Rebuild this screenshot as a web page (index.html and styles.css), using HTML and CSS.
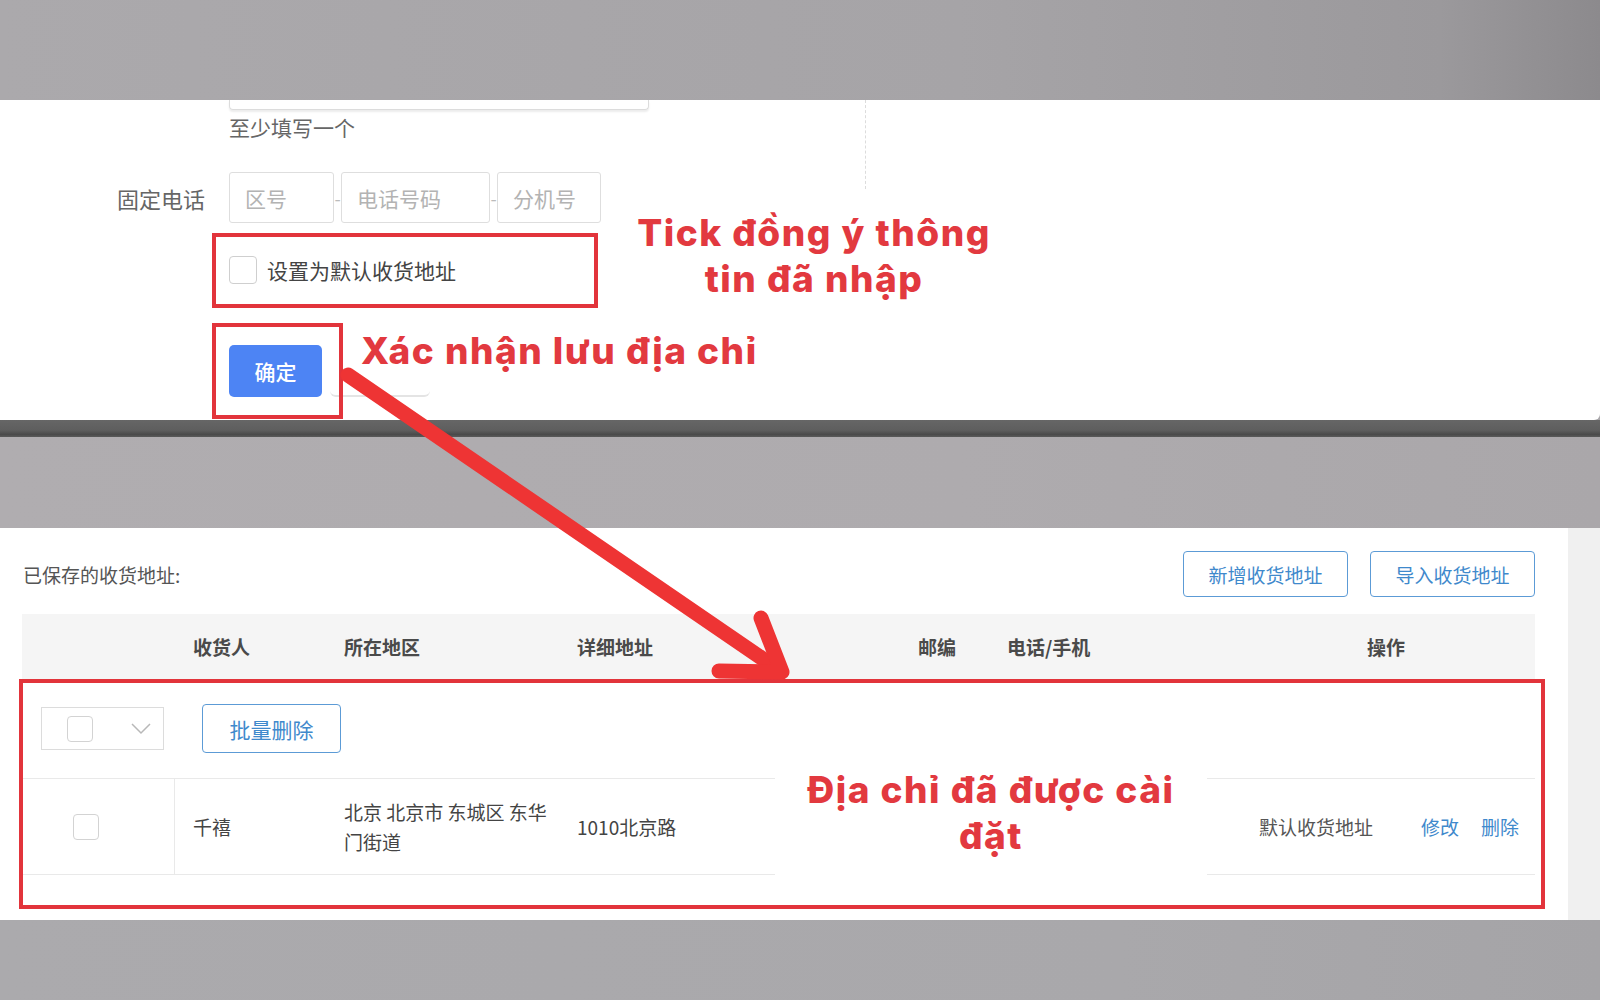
FILE: index.html
```html
<!DOCTYPE html>
<html lang="zh-CN">
<head>
<meta charset="utf-8">
<title>收货地址</title>
<link rel="stylesheet" href="styles.css">
</head>
<body>
<div class="page">
  <div class="band band-top"></div>

  <section class="panel-top">
    <div class="form-col">
      <div class="clipped-input"></div>
      <div class="hint">至少填写一个</div>
      <div class="phone-row">
        <span class="row-label">固定电话</span>
        <div class="inp inp-area">区号</div>
        <span class="dash">-</span>
        <div class="inp inp-num">电话号码</div>
        <span class="dash">-</span>
        <div class="inp inp-ext">分机号</div>
      </div>
      <div class="check-row">
        <span class="cbox"></span>
        <span class="check-text">设置为默认收货地址</span>
      </div>
      <div class="btn-row">
        <button class="btn-primary">确定</button>
        <span class="btn-ghost"></span>
      </div>
    </div>
    <div class="vsep"></div>
  </section>

  <div class="bar"></div>
  <div class="band band-mid"></div>

  <section class="panel-bottom">
    <div class="addr-main">
      <div class="addr-head">
        <span class="addr-title">已保存的收货地址:</span>
        <div class="head-btns">
          <button class="btn-outline">新增收货地址</button>
          <button class="btn-outline">导入收货地址</button>
        </div>
      </div>
      <div class="table">
        <div class="thead">
          <div class="c c-check"></div>
          <div class="c">收货人</div>
          <div class="c">所在地区</div>
          <div class="c">详细地址</div>
          <div class="c">邮编</div>
          <div class="c">电话/手机</div>
          <div class="c c-op-head">操作</div>
        </div>
        <div class="toolbar">
          <div class="select-all">
            <span class="cbox cbox-sm"></span>
            <svg class="chev" width="20" height="12" viewBox="0 0 20 12"><polyline points="1,1 10,10 19,1" fill="none" stroke="#b8b8b8" stroke-width="1.5"/></svg>
          </div>
          <button class="btn-outline btn-batch">批量删除</button>
        </div>
        <div class="trow">
          <div class="c c-check c-check-row"><span class="cbox cbox-sm"></span></div>
          <div class="c">千禧</div>
          <div class="c c-region">北京 北京市 东城区 东华<br>门街道</div>
          <div class="c">1010北京路</div>
          <div class="c"></div>
          <div class="c"></div>
          <div class="c c-op">
            <span class="default-tag">默认收货地址</span>
            <a class="link link-edit">修改</a>
            <a class="link">删除</a>
          </div>
        </div>
      </div>
    </div>
    <div class="addr-strip"></div>
  </section>

  <div class="band band-bottom"></div>

  <!-- annotations -->
  <div class="mark mark-check"></div>
  <div class="mark mark-btn"></div>
  <div class="mark mark-table"></div>
  <div class="note note-tick">Tick đồng ý thông<br>tin đã nhập</div>
  <div class="note note-save">Xác nhận lưu địa chỉ</div>
  <div class="note note-done">Địa chỉ đã được cài<br>đặt</div>
  <svg class="arrow" width="1600" height="1000" viewBox="0 0 1600 1000">
    <g stroke="#ee3434" stroke-width="15" stroke-linecap="round" stroke-linejoin="round" fill="none">
      <path d="M348 375 L779 670"/>
      <path d="M761 618 L782 672 L719 671"/>
    </g>
  </svg>
</div>
</body>
</html>
```

FILE: styles.css
```css
* { box-sizing: border-box; }
html, body { margin: 0; padding: 0; }
body {
  font-family: "Noto Sans CJK SC", "Noto Sans", sans-serif;
  background: #a9a7aa;
}
.page {
  position: relative;
  width: 1600px;
  height: 1000px;
  overflow: hidden;
}
.band-top {
  height: 100px;
  background: linear-gradient(to right, #aba9ac 0%, #a6a4a7 60%, #9b999c 90%, #8c8a8d 100%);
}
.band-mid {
  height: 91px;
  background: linear-gradient(to right, #b0adb0 0%, #aeabae 60%, #aaa7aa 100%);
}
.band-bottom {
  height: 80px;
  background: linear-gradient(to right, #abaaad 0%, #a9a8ab 70%, #a5a4a7 100%);
}
.bar {
  height: 17px;
  background: linear-gradient(#666 0%, #5e5e5e 60%, #4a4a4a 85%, #5a5a5a 100%);
}

/* ---------- top form panel ---------- */
.panel-top {
  height: 320px;
  background: #fff;
  display: flex;
  align-items: flex-start;
  border-radius: 0 0 6px 0;
}
.form-col { width: 865px; }
.clipped-input {
  margin-left: 229px;
  width: 420px;
  height: 10px;
  border: 1px solid #dcdcdc;
  border-top: none;
  border-radius: 0 0 4px 4px;
  box-shadow: 0 2px 2px rgba(0,0,0,0.08);
}
.hint {
  margin: 5px 0 0 229px;
  font-size: 21px;
  line-height: 24px;
  color: #666;
}
.phone-row {
  margin-top: 33px;
  height: 51px;
  display: flex;
  align-items: center;
}
.row-label {
  width: 229px;
  padding-right: 24px;
  text-align: right;
  font-size: 22px;
  color: #666;
}
.inp {
  height: 51px;
  border: 1px solid #dedede;
  border-radius: 3px;
  display: flex;
  align-items: center;
  padding-left: 15px;
  font-size: 21px;
  color: #b3b3b3;
}
.inp-area { width: 105px; }
.inp-num { width: 149px; }
.inp-ext { width: 104px; }
.dash {
  width: 7px;
  text-align: center;
  color: #bbb;
  font-size: 18px;
}
.check-row {
  margin: 33px 0 0 229px;
  height: 28px;
  display: flex;
  align-items: center;
  gap: 10px;
}
.cbox {
  display: inline-block;
  width: 28px;
  height: 28px;
  border: 1px solid #cfcfcf;
  border-radius: 4px;
  background: #fff;
}
.check-text {
  font-size: 21px;
  color: #444;
}
.btn-row {
  margin: 61px 0 0 229px;
  display: flex;
  align-items: flex-start;
}
.btn-primary {
  width: 93px;
  height: 52px;
  border: none;
  border-radius: 5px;
  background: #4d84f4;
  color: #fff;
  font-family: inherit;
  font-size: 21px;
  font-weight: 500;
}
.btn-ghost {
  display: block;
  margin-left: 8px;
  width: 100px;
  height: 52px;
  border-bottom: 2px solid #e4e4e4;
  border-radius: 0 0 6px 6px;
}
.vsep {
  height: 89px;
  border-left: 1px dashed #dcdcdc;
}

/* ---------- address list panel ---------- */
.panel-bottom {
  height: 392px;
  display: flex;
}
.addr-main {
  flex: 1;
  background: #fff;
  padding: 23px 33px 0 22px;
}
.addr-strip {
  width: 32px;
  background: #f0f0f0;
}
.addr-head {
  height: 46px;
  display: flex;
  align-items: center;
  justify-content: space-between;
}
.addr-title {
  font-size: 19px;
  color: #555;
  padding-left: 1px;
}
.head-btns {
  display: flex;
  gap: 22px;
}
.btn-outline {
  height: 46px;
  width: 165px;
  background: #fff;
  border: 1.5px solid #5c9bd6;
  border-radius: 4px;
  color: #3f89cc;
  font-family: inherit;
  font-size: 19px;
  padding: 0;
}
.table { margin-top: 17px; }
.thead, .trow {
  display: grid;
  grid-template-columns: 153px 151px 233px 341px 89px 252px 1fr;
}
.thead {
  height: 65px;
  background: #f5f5f5;
  align-items: center;
  font-size: 19px;
  font-weight: 700;
  color: #4a4a4a;
}
.c { padding-left: 18px; }
.c-check { padding-left: 0; }
.c-op-head { padding-left: 126px; }
.toolbar {
  height: 100px;
  border-bottom: 1px solid #e9e9e9;
  display: flex;
  align-items: center;
  padding-left: 19px;
}
.select-all {
  width: 123px;
  height: 43px;
  border: 1px solid #dcdcdc;
  display: flex;
  align-items: center;
  padding-left: 25px;
  gap: 38px;
}
.cbox-sm {
  width: 26px;
  height: 26px;
  border-radius: 4px;
  border-color: #d3d3d3;
}
.btn-batch {
  margin-left: 38px;
  width: 139px;
  height: 49px;
  font-size: 21px;
}
.trow {
  height: 96px;
  border-bottom: 1px solid #e9e9e9;
  align-items: center;
  font-size: 19px;
  color: #444;
}
.c-check-row {
  height: 100%;
  border-right: 1px solid #e9e9e9;
  display: flex;
  align-items: center;
  padding-left: 51px;
}
.c-region { line-height: 30px; }
.c-op {
  display: flex;
  align-items: center;
}
.default-tag { color: #555; }
.link {
  color: #3f89cc;
  cursor: pointer;
}
.link-edit { margin-left: 48px; margin-right: 22px; }

/* ---------- annotations (overlay) ---------- */
.mark {
  position: absolute;
  border: 4px solid #e2343b;
}
.mark-check { left: 212px; top: 233px; width: 386px; height: 75px; }
.mark-btn { left: 212px; top: 323px; width: 131px; height: 96px; }
.mark-table { left: 19px; top: 679px; width: 1526px; height: 230px; }
.note {
  position: absolute;
  font-family: "Inter", "Open Sans", sans-serif;
  font-weight: 800;
  font-size: 37px;
  letter-spacing: 1.5px;
  line-height: 46px;
  color: #e2393f;
  text-align: center;
  white-space: nowrap;
}
.note-tick { left: 613px; top: 210px; width: 402px; }
.note-save { left: 361px; top: 328px; text-align: left; }
.note-done {
  left: 775px;
  top: 766px;
  width: 432px;
  height: 112px;
  padding-top: 1px;
  background: #fff;
}
.arrow {
  position: absolute;
  left: 0;
  top: 0;
  pointer-events: none;
}
```
